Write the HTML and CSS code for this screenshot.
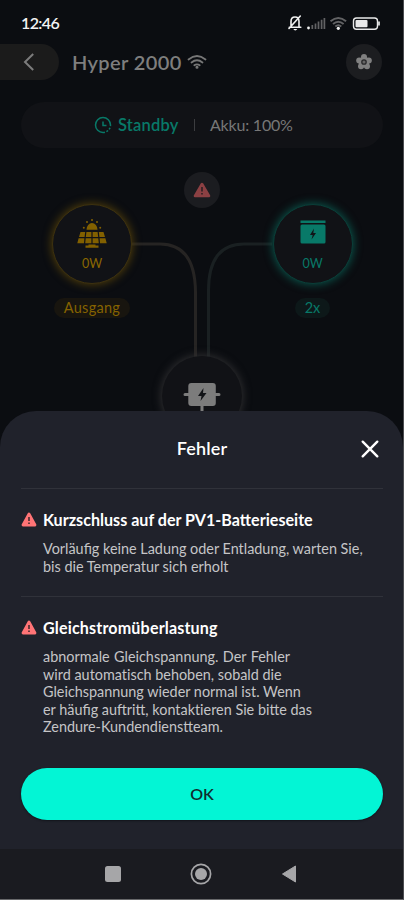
FILE: index.html
```html
<!DOCTYPE html>
<html lang="de">
<head>
<meta charset="utf-8">
<title>Hyper 2000</title>
<link rel="stylesheet" href="styles.css">
</head>
<body>
<div class="phone">
  <div class="statusbar">
    <span class="clock">12:46</span>
    <svg class="sysicons" width="96" height="18" viewBox="0 0 96 18" fill="none">
      <g stroke="#f1f1f1" stroke-width="1.6" stroke-linecap="round" stroke-linejoin="round">
        <path d="M2.3 13.2H13.8M4 12.8V7.5C4 4.6 5.500 3 8 3s4 1.600 4 4.500v5.300M2 14.500 13.300 2"/>
      </g>
      <path d="M6.300 15h4q-.7 1.400-2 1.400T6.300 15z" fill="#f1f1f1"/>
      <circle cx="21.500" cy="14" r="1.400" fill="#f1f1f1"/>
      <path d="M25.300 11v4M28.500 9.500V15M31.500 7.500V15M34.600 5.700V15M37.400 4V15" stroke="#626264" stroke-width="1.700"/>
      <g stroke="#626264" stroke-width="1.900">
        <path d="M43.500 7.300Q51.300 .8 59.100 7.300M46 10Q51.300 5.500 56.600 10M48.300 12.500Q51.300 10 54.300 12.500"/>
      </g>
      <circle cx="51.300" cy="14.300" r="1.600" fill="#f1f1f1"/>
      <rect x="66.500" y="4" width="24" height="11.300" rx="3" stroke="#e9e9e9" stroke-width="1.400"/>
      <rect x="68.500" y="6" width="12" height="7.300" rx="1" fill="#e9e9e9"/>
      <path d="M92 7.500v4" stroke="#e9e9e9" stroke-width="1.700"/>
    </svg>
  </div>
  <header class="header">
    <div class="back"><svg width="12" height="18" viewBox="0 0 12 18" fill="none" stroke="#7c7c7c" stroke-width="2"><path d="M10.200 1 2 9l8.200 8"/></svg></div>
    <h1 class="title">Hyper 2000</h1>
    <svg class="wifi" width="20" height="16" viewBox="0 0 20 16" fill="none" stroke="#777" stroke-width="1.700" stroke-linecap="round">
      <path d="M1.500 5.500Q10-1.500 18.500 5.500M4.500 8.500Q10 4 15.500 8.500M7.300 11.300Q10 9.300 12.700 11.300"/><circle cx="10" cy="13.200" r=".7" fill="#777"/>
    </svg>
    <div class="settings"><svg width="18" height="18" viewBox="-9 -9 18 18">
      <g fill="#808080"><circle r="5.500"/><circle cy="-5" r="3"/><circle cx="4.800" cy="-1.600" r="3"/><circle cx="3" cy="4.300" r="3"/><circle cx="-3" cy="4.300" r="3"/><circle cx="-4.800" cy="-1.600" r="3"/></g>
      <circle r="2.200" fill="#666" stroke="#29292b" stroke-width="1.300"/></svg></div>
  </header>
  <section class="summary">
    <svg width="18" height="18" viewBox="0 0 18 18" fill="none" stroke="#087968" stroke-width="1.500">
      <path d="M16.500 9A7.500 7.500 0 1 0 9 16.500"/><path d="M9 16.500A7.500 7.500 0 0 0 16.500 9" stroke-dasharray="2 1.500"/><path d="M9 5.500V9.500H12.500"/></svg>
    <span class="standby">Standby</span><span class="bar"></span><span class="akku">Akku: 100%</span>
  </section>

  <div class="flow">
    <svg class="wires" width="404" height="263" viewBox="0 148 404 263" fill="none" stroke-width="3">
      <path d="M132 244H160Q195 244 195.500 292V358" stroke="#262423"/>
      <path d="M272 244H244Q208 244 208.500 292V358" stroke="#1a2022"/>
    </svg>
    <div class="alert"><svg width="18" height="16" viewBox="0 0 18 16"><path d="M9 2 16 14H2z" fill="#8b4043" stroke="#8b4043" stroke-width="2.600" stroke-linejoin="round"/><path d="M9 5v4.500M9 11v1.600" stroke="#2b2023" stroke-width="1.600"/></svg></div>
    <div class="node solar">
      <svg width="30" height="31" viewBox="0 0 30 31" fill="#826000">
        <path d="M9.500 11.800a5.500 6.800 0 0 1 11 0z"/>
        <g><circle cx="15" cy="2" r="1"/><circle cx="10" cy="4" r="1"/><circle cx="20" cy="4" r="1"/><circle cx="6.800" cy="9.800" r="1"/><circle cx="23.200" cy="9.800" r="1"/></g>
        <path d="M3.500 14h4.700l-.6 5H2zM9.400 14h5v5H8.800zM15.600 14h5l.6 5h-5.600zM21.800 14h4.700l1.500 5h-5.600zM1.600 20.300h5.800L7 25.200H.3zM8.700 20.300h5.700v4.900H8.200zM15.600 20.300h5.700l.5 4.900h-6.200zM22.600 20.300h5.800l1.300 4.900H23zM11.500 26.500h7v1h3v2.300h-13v-2.300h3z"/>
      </svg>
      <span>0W</span>
    </div>
    <div class="tag tag-solar">Ausgang</div>
    <div class="node battery">
      <svg width="26" height="24" viewBox="0 0 26 24"><path d="M.5.500h25V3H.5z" fill="#087968"/><rect x=".5" y="4.500" width="25" height="19" rx="1.500" fill="#087968"/><path d="M14 8.500 10 15h2.700L11.500 19.500 16 13h-2.700z" fill="#111317"/></svg>
      <span>0W</span>
    </div>
    <div class="tag tag-battery">2x</div>
    <div class="node hub">
      <svg width="38" height="30" viewBox="0 0 38 30"><path d="M2 12.500H36M19 20v9" stroke="#7c7c7c" stroke-width="3" stroke-linecap="round"/><rect x="5.300" y="1" width="27.500" height="23" rx="3" fill="#7c7c7c"/><path d="M20.500 6 15 14h3.500L17.500 19 23.500 11H20z" fill="#111317"/></svg>
    </div>
  </div>

  <div class="sheet">
    <div class="sheet-head">
      <h2>Fehler</h2>
      <svg class="close" width="18" height="18" viewBox="0 0 18 18"><path d="M1.700 1.700 16.300 16.300M16.300 1.700 1.700 16.300" stroke="#fff" stroke-width="2.400" stroke-linecap="round"/></svg>
    </div>
    <article class="fault">
      <h3><svg width="16" height="15" viewBox="0 0 16 15"><path d="M8 2 14 13H2z" fill="#ff7476" stroke="#ff7476" stroke-width="2.800" stroke-linejoin="round"/><path d="M8 5v4M8 10.400v1.500" stroke="#3c2529" stroke-width="1.500"/></svg><span>Kurzschluss auf der PV1-Batterieseite</span></h3>
      <p>Vorläufig keine Ladung oder Entladung, warten Sie,<br>bis die Temperatur sich erholt</p>
    </article>
    <article class="fault">
      <h3><svg width="16" height="15" viewBox="0 0 16 15"><path d="M8 2 14 13H2z" fill="#ff7476" stroke="#ff7476" stroke-width="2.800" stroke-linejoin="round"/><path d="M8 5v4M8 10.400v1.500" stroke="#3c2529" stroke-width="1.500"/></svg><span class="wide">Gleichstromüberlastung</span></h3>
      <p><span class="loose">abnormale Gleichspannung. Der Fehler</span><br>wird <span class="plain">automatisch</span> behoben, sobald die<br>Gleichspannung wieder normal ist. Wenn<br>er häufig auftritt, <span class="plain">kontaktieren</span> Sie bitte das<br>Zendure-Kundendienstteam.</p>
    </article>
    <button class="ok">OK</button>
  </div>
  <nav class="navbar">
    <svg width="16" height="16"><rect width="16" height="16" rx="2.500" fill="#a6a6a8"/></svg>
    <svg width="22" height="22" viewBox="0 0 22 22"><circle cx="11" cy="11" r="9.600" fill="none" stroke="#a6a6a8" stroke-width="1.700"/><circle cx="11" cy="11" r="6" fill="#a6a6a8"/></svg>
    <svg width="16" height="18" viewBox="0 0 16 18"><path d="M14.500 1v16L1.500 9z" fill="#a6a6a8" stroke="#a6a6a8" stroke-linejoin="round"/></svg>
  </nav>
</div>
</body>
</html>
```
FILE: styles.css
```css
* { box-sizing: border-box; }
body { margin: 0; background: #0b0d11; font-family: Lato, "Liberation Sans", sans-serif; }
h1, h2, h3, p { margin: 0; }
svg { display: block; flex: none; }
span { white-space: nowrap; }
.phone { position: relative; width: 404px; height: 900px; overflow: hidden; background: #0b0d11; border-right: 1px solid #4b4c50; border-bottom: 1px solid #68696b; }

.statusbar { height: 44px; padding: 1px 22px 0 21px; display: flex; align-items: center; justify-content: space-between; }
.clock { color: #f3f3f3; font-size: 16px; font-weight: 600; letter-spacing: -.6px; }
.sysicons { margin-right: -2px; }

.header { height: 36px; display: flex; align-items: center; }
.back { width: 59px; height: 36px; border-radius: 0 18px 18px 0; background: #1b1b1b; padding-left: 23px; display: flex; align-items: center; }
.title { margin-left: 13px; width: 111px; font-size: 20px; font-weight: 600; letter-spacing: .4px; color: #7e7e7e; white-space: nowrap; }
.wifi { margin-left: 4px; }
.settings { margin: 0 21.500px 0 auto; width: 36px; height: 36px; border-radius: 50%; background: #1c1d20; display: flex; align-items: center; justify-content: center; }

.summary { margin: 22px 20px 0 21px; height: 46px; border-radius: 23px; background: #111216; display: flex; align-items: center; padding-left: 73px; }
.standby { margin-left: 6px; width: 62px; font-size: 16.500px; font-weight: 600; letter-spacing: .2px; color: #087968; }
.bar { width: 1px; height: 12px; margin: 0 15px 0 14px; background: #3c3d40; }
.akku { font-size: 16px; letter-spacing: -.2px; padding-bottom: 2px; color: #777; }

.flow { position: relative; height: 263px; }
.alert { position: absolute; left: 184px; top: 24px; width: 36px; height: 36px; border-radius: 50%; background: #1b1c20; display: flex; align-items: center; justify-content: center; }
.node { position: absolute; width: 80px; height: 80px; border-radius: 50%; background: #111216; display: flex; flex-direction: column; align-items: center; font-size: 12.500px; }
.solar { left: 52px; top: 56px; color: #8b6700; padding-top: 13px; border: 1px solid #3d310f; box-shadow: 0 0 9px 1px #4c3b0b; }
.solar span { margin-top: 7px; }
.battery { left: 272.500px; top: 56px; color: #087968; padding-top: 15px; border: 1px solid #0a3e38; box-shadow: 0 0 9px 1px #0a5047; }
.battery span { margin-top: 12px; }
.hub { left: 162px; top: 208px; padding-top: 26px; box-shadow: 0 0 9px 1px #303032; }
.tag { position: absolute; top: 150px; height: 20px; line-height: 20px; border-radius: 10px; text-align: center; font-size: 14.500px; }
.tag-solar { left: 54px; width: 76px; letter-spacing: .3px; color: #866300; background: #18150f; }
.tag-battery { left: 295px; width: 35px; color: #087968; background: #0d1819; }

.sheet { position: absolute; left: 0; right: 0; top: 411px; height: 438px; border-radius: 36px 36px 0 0; background: #20222b; padding: 0 20px 0 21px; }
.sheet-head { height: 77px; padding-bottom: 3px; display: flex; align-items: center; justify-content: center; position: relative; }
.sheet-head h2 { color: #fff; font-size: 18px; font-weight: 600; letter-spacing: .15px; }
.close { position: absolute; right: 4px; top: 29px; }
.fault { border-top: 1px solid #30323a; height: 108px; padding-top: 21px; }
.fault h3 { display: flex; align-items: center; height: 18px; gap: 6px; color: #fff; font-size: 16.100px; font-weight: 700; }
.fault h3 span { padding-top: 1px; }
.fault .wide { letter-spacing: .15px; }
.fault p { margin: 12px 0 0 22px; color: #c5c5c7; font-size: 14.400px; line-height: 17.600px; white-space: nowrap; }
.loose { word-spacing: .8px; }
.plain { font-variant-ligatures: none; }
.fault + .fault { height: 172px; }
.ok { display: block; width: 362px; height: 52px; padding: 0 0 2px; border: 0; border-radius: 26px; background: #03f5d5; color: #112a2c; font: 600 16px Lato, "Liberation Sans", sans-serif; box-shadow: 0 1px 2px #12141b; }
.navbar { position: absolute; left: 0; right: 0; top: 849px; height: 50px; background: #1a1b20; display: flex; align-items: center; padding-left: 105px; gap: 69px; }
```
